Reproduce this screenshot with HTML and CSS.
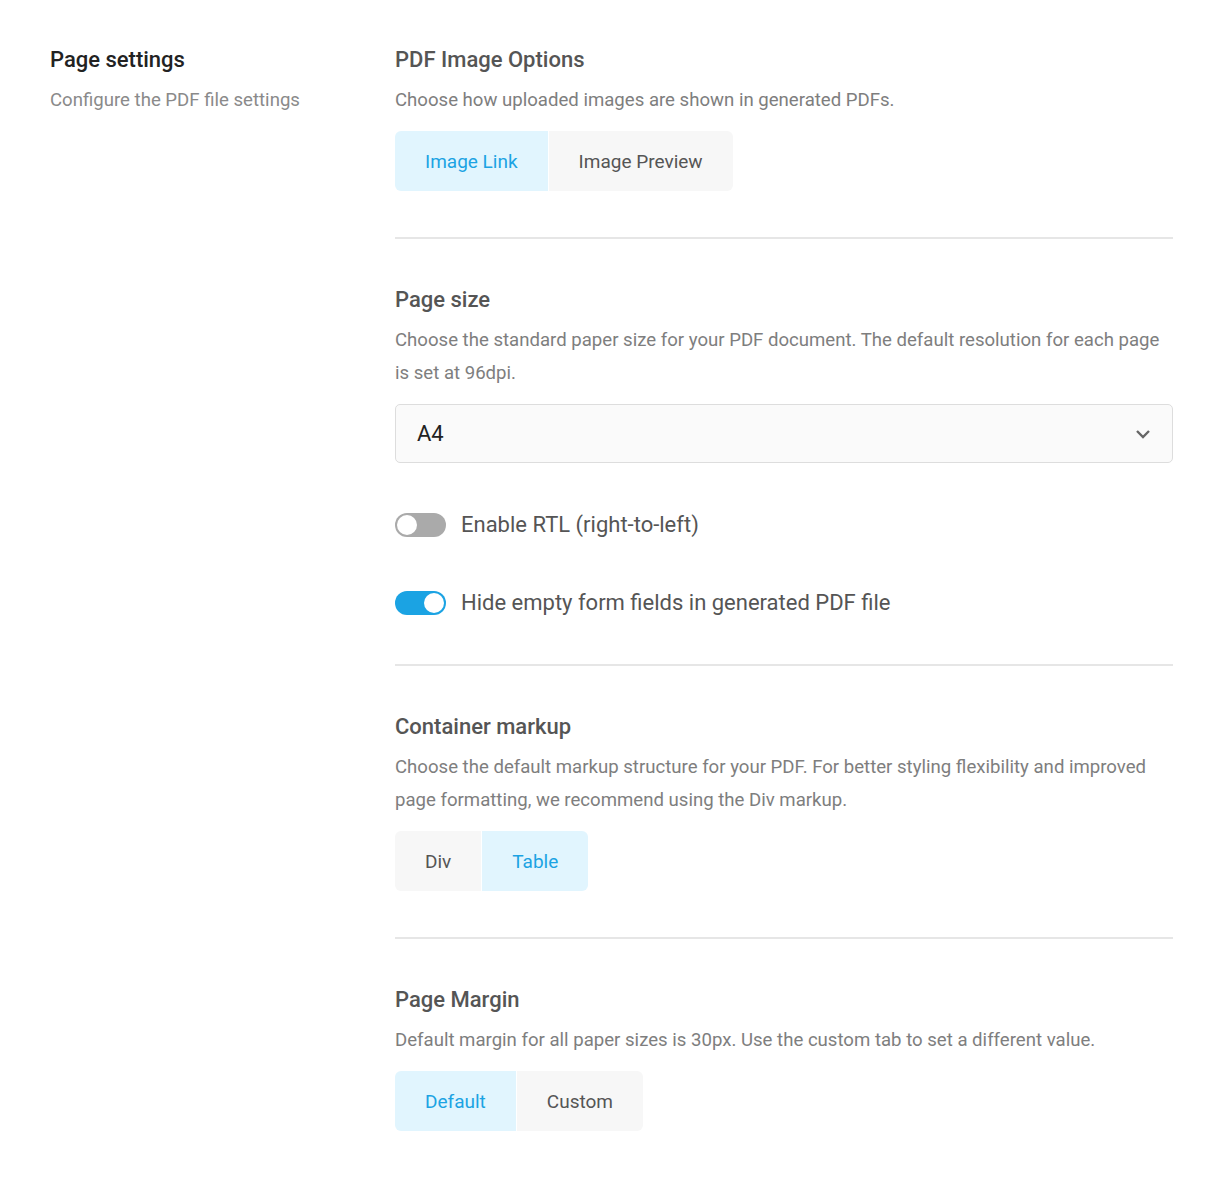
FILE: index.html
```html
<!DOCTYPE html>
<html lang="en">
<head>
    <meta charset="UTF-8">
    <meta name="viewport" content="width=device-width, initial-scale=1.0">
    <title>Page settings</title>
    <link rel="stylesheet" href="styles.css">
</head>
<body>
    <div class="settings">
        <div class="settings-intro">
            <h2>Page settings</h2>
            <p>Configure the PDF file settings</p>
        </div>

        <div class="settings-body">
            <div class="section">
                <h3>PDF Image Options</h3>
                <p class="desc">Choose how uploaded images are shown in generated PDFs.</p>
                <div class="btn-group">
                    <button class="active">Image Link</button>
                    <button>Image Preview</button>
                </div>
            </div>

            <div class="section">
                <h3>Page size</h3>
                <p class="desc">Choose the standard paper size for your PDF document. The default resolution for each page is set at 96dpi.</p>
                <div class="select">
                    <span>A4</span>
                    <svg width="16" height="10" viewBox="0 0 16 10"><path d="M2 2l6 6 6-6" fill="none" stroke="#666" stroke-width="2.4"/></svg>
                </div>
                <label class="toggle-row">
                    <span class="toggle"></span>
                    Enable RTL (right-to-left)
                </label>
                <label class="toggle-row">
                    <span class="toggle on"></span>
                    Hide empty form fields in generated PDF file
                </label>
            </div>

            <div class="section">
                <h3>Container markup</h3>
                <p class="desc">Choose the default markup structure for your PDF. For better styling flexibility and improved page formatting, we recommend using the Div markup.</p>
                <div class="btn-group">
                    <button>Div</button>
                    <button class="active">Table</button>
                </div>
            </div>

            <div class="section">
                <h3>Page Margin</h3>
                <p class="desc">Default margin for all paper sizes is 30px. Use the custom tab to set a different value.</p>
                <div class="btn-group">
                    <button class="active">Default</button>
                    <button>Custom</button>
                </div>
            </div>
        </div>
    </div>
</body>
</html>
```

FILE: styles.css
```css
:root {
    --accent: #1ba3e3;
    --accent-bg: #e1f5fe;
    --muted-bg: #f7f7f7;
    --text: #555;
    --text-light: #7e7e7e;
    --line: #e6e6e6;
}

body {
    margin: 0;
    font-family: Roboto, "Liberation Sans", sans-serif;
    background: #fff;
    color: var(--text);
}

.settings {
    display: grid;
    grid-template-columns: 345px 778px;
    padding: 45px 0 0 50px;
}

.settings-intro h2 {
    margin: 0 0 9px;
    font-size: 22px;
    font-weight: 500;
    line-height: 30px;
    color: #222;
}

.settings-intro p {
    margin: 0;
    font-size: 18.6px;
    line-height: 33px;
    color: #8a8a8a;
}

.section {
    padding: 46px 0;
    border-bottom: 2px solid var(--line);
}

.section:first-child {
    padding-top: 0;
}

.section:last-child {
    border-bottom: none;
}

.section h3 {
    margin: 0 0 9px;
    font-size: 22px;
    font-weight: 500;
    line-height: 30px;
    color: var(--text);
}

.desc {
    margin: 0 0 14px;
    font-size: 18.6px;
    line-height: 33px;
    color: var(--text-light);
}

.btn-group {
    display: inline-flex;
    gap: 1px;
    background: #fff;
    border-radius: 6px;
    overflow: hidden;
}

.btn-group button {
    height: 60px;
    padding: 0 30px;
    border: none;
    background: var(--muted-bg);
    color: var(--text);
    font-family: inherit;
    font-size: 19px;
    cursor: pointer;
}

.btn-group button.active {
    background: var(--accent-bg);
    color: var(--accent);
}

.select {
    display: flex;
    align-items: center;
    justify-content: space-between;
    height: 57px;
    padding: 0 21px;
    border: 1px solid #ddd;
    border-radius: 5px;
    background: #fafafa;
    font-size: 22px;
    color: #222;
    margin-bottom: 47px;
}

.toggle-row {
    display: flex;
    align-items: center;
    gap: 15px;
    font-size: 22px;
    font-weight: 400;
    line-height: 30px;
    color: var(--text);
    cursor: pointer;
}

.toggle-row + .toggle-row {
    margin-top: 48px;
}

.toggle {
    position: relative;
    width: 51px;
    height: 24px;
    border-radius: 12px;
    background: #aaa;
    flex-shrink: 0;
}

.toggle::after {
    content: "";
    position: absolute;
    top: 2px;
    left: 2px;
    width: 20px;
    height: 20px;
    border-radius: 50%;
    background: #fff;
}

.toggle.on {
    background: var(--accent);
}

.toggle.on::after {
    left: 29px;
}
```
